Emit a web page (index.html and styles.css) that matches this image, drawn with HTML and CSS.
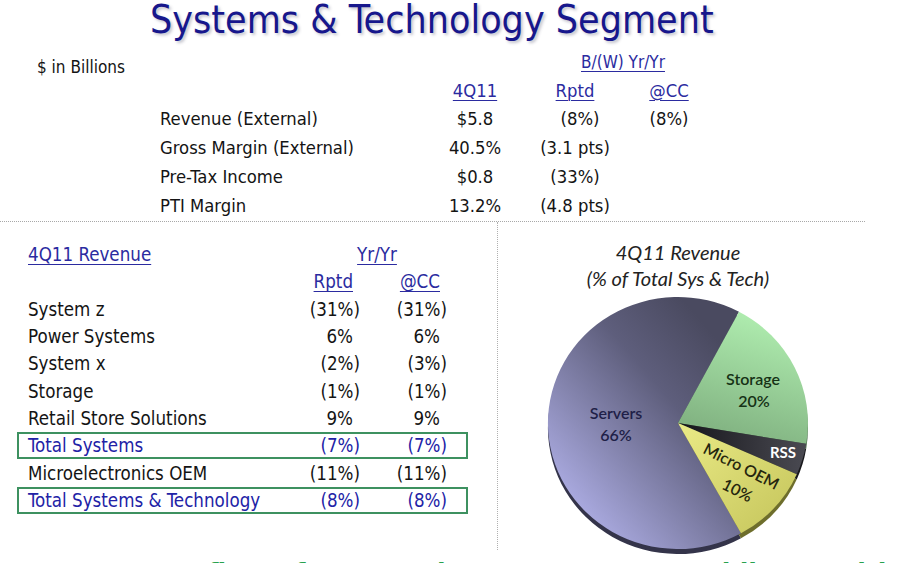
FILE: index.html
```html
<!DOCTYPE html>
<html>
<head>
<meta charset="utf-8">
<title>Systems &amp; Technology Segment</title>
<link rel="stylesheet" href="styles.css">
</head>
<body>
<h1 class="title">Systems &amp; Technology Segment</h1>

<section class="summary">
  <div class="units">$ in Billions</div>
  <div class="bw"><span class="ul">B/(W) Yr/Yr</span></div>

  <div class="c3 hd"><span class="ul">4Q11</span></div>
  <div class="c4 hd"><span class="ul">Rptd</span></div>
  <div class="c5 hd"><span class="ul">@CC</span></div>

  <div class="c2">Revenue (External)</div>
  <div class="c3">$5.8</div>
  <div class="c4 nudge">(8%)</div>
  <div class="c5">(8%)</div>

  <div class="c2">Gross Margin (External)</div>
  <div class="c3">40.5%</div>
  <div class="c4">(3.1 pts)</div>
  <div class="c5"></div>

  <div class="c2">Pre-Tax Income</div>
  <div class="c3">$0.8</div>
  <div class="c4">(33%)</div>
  <div class="c5"></div>

  <div class="c2">PTI Margin</div>
  <div class="c3">13.2%</div>
  <div class="c4">(4.8 pts)</div>
  <div class="c5"></div>
</section>

<section class="lower">
  <div class="rev">
    <div class="row">
      <span class="hdr"><span class="ul">4Q11 Revenue</span></span>
      <span class="yy"><span class="ul">Yr/Yr</span></span>
    </div>
    <div class="row">
      <span></span>
      <span class="num pos hdr"><span class="ul">Rptd</span></span>
      <span class="num pos hdr"><span class="ul">@CC</span></span>
    </div>
    <div class="row"><span>System z</span><span class="num">(31%)</span><span class="num">(31%)</span></div>
    <div class="row"><span>Power Systems</span><span class="num pos">6%</span><span class="num pos">6%</span></div>
    <div class="row"><span>System x</span><span class="num">(2%)</span><span class="num">(3%)</span></div>
    <div class="row"><span>Storage</span><span class="num">(1%)</span><span class="num">(1%)</span></div>
    <div class="row"><span>Retail Store Solutions</span><span class="num pos">9%</span><span class="num pos">9%</span></div>
    <div class="row box"><span>Total Systems</span><span class="num">(7%)</span><span class="num">(7%)</span></div>
    <div class="row"><span>Microelectronics OEM</span><span class="num">(11%)</span><span class="num">(11%)</span></div>
    <div class="row box"><span>Total Systems &amp; Technology</span><span class="num">(8%)</span><span class="num">(8%)</span></div>
  </div>

  <div class="chart">
    <div class="chart-title">4Q11 Revenue<br>(% of Total Sys &amp; Tech)</div>
    <svg class="pie" viewBox="0 0 280 270" width="280" height="270">
      <defs>
        <linearGradient id="gServ" x1="0.05" y1="0.95" x2="0.8" y2="0.1">
          <stop offset="0" stop-color="#bcbcf8"/>
          <stop offset="0.4" stop-color="#8686b0"/>
          <stop offset="0.7" stop-color="#5e5e7c"/>
          <stop offset="1" stop-color="#4a4a60"/>
        </linearGradient>
        <linearGradient id="gStor" x1="0.6" y1="0" x2="0.3" y2="1">
          <stop offset="0" stop-color="#b0eeb0"/>
          <stop offset="1" stop-color="#7eae7e"/>
        </linearGradient>
        <linearGradient id="gRss" x1="0" y1="0" x2="1" y2="0">
          <stop offset="0" stop-color="#15151a"/>
          <stop offset="1" stop-color="#4a4a52"/>
        </linearGradient>
        <linearGradient id="gMicro" x1="0" y1="0" x2="1" y2="1">
          <stop offset="0" stop-color="#eaea86"/>
          <stop offset="1" stop-color="#c4c45a"/>
        </linearGradient>
      </defs>
      <g transform="translate(0,5)">
        <path d="M140,132 L203,242.2 A130,126 0 1 1 201,20.8 Z" fill="#34344a"/>
        <path d="M140,132 L201,20.8 A130,126 0 0 1 268.2,152.8 Z" fill="#4e6e4e"/>
        <path d="M140,132 L268.2,152.8 A130,126 0 0 1 258.8,183.2 Z" fill="#18181c"/>
        <path d="M140,132 L258.8,183.2 A130,126 0 0 1 203,242.2 Z" fill="#6e6e2c"/>
      </g>
      <path d="M140,132 L203,242.2 A130,126 0 1 1 201,20.8 Z" fill="url(#gServ)"/>
      <path d="M140,132 L201,20.8 A130,126 0 0 1 268.2,152.8 Z" fill="url(#gStor)"/>
      <path d="M140,132 L268.2,152.8 A130,126 0 0 1 258.8,183.2 Z" fill="url(#gRss)"/>
      <path d="M140,132 L258.8,183.2 A130,126 0 0 1 203,242.2 Z" fill="url(#gMicro)"/>
      <text class="pl dark" x="78" y="128" text-anchor="middle">Servers</text>
      <text class="pl dark" x="78" y="150" text-anchor="middle">66%</text>
      <text class="pl green" x="215" y="94" text-anchor="middle">Storage</text>
      <text class="pl green" x="216" y="116" text-anchor="middle">20%</text>
      <text class="pl white" x="245" y="167" text-anchor="middle">RSS</text>
      <text class="pl olive" transform="translate(203,176) rotate(27)" y="5" text-anchor="middle">Micro OEM</text>
      <text class="pl olive" transform="translate(199,200) rotate(27)" y="5" text-anchor="middle">10%</text>
    </svg>
  </div>
</section>

<p class="takeaway">Strong profit performance in Power Systems while transitioning System z</p>
</body>
</html>
```

FILE: styles.css
```css
html, body {
  margin: 0;
  padding: 0;
}
body {
  width: 900px;
  height: 563px;
  overflow: hidden;
  background: #ffffff;
  color: #141414;
  font-family: "DejaVu Sans Condensed", "DejaVu Sans", sans-serif;
  font-stretch: condensed;
  font-size: 18.3px;
}

.title {
  margin: 0;
  padding-left: 150px;
  height: 48px;
  font-size: 39px;
  line-height: 40px;
  font-weight: normal;
  color: #17178c;
  text-shadow: 2px 2px 3px rgba(60, 60, 90, 0.3);
  white-space: nowrap;
}

.ul {
  text-decoration: underline;
  text-decoration-thickness: 1px;
  text-underline-offset: 3px;
  color: #2b2ba0;
}

.summary {
  display: grid;
  width: 865px;
  box-sizing: border-box;
  padding-left: 37px;
  grid-template-columns: 123px 270px 90px 110px 78px;
  grid-template-rows: 28px 28px 29px 29px 29px 29px;
  align-items: center;
  border-bottom: 1px dotted #a8a8a8;
  padding-bottom: 1px;
  white-space: nowrap;
}
.units {
  grid-column: 1 / 3;
  align-self: end;
  font-size: 17px;
  line-height: 18px;
}
.bw {
  grid-column: 4 / 6;
  text-align: center;
  padding-left: 18px;
  font-size: 17px;
}
.c2 { grid-column: 2; }
.c3 { grid-column: 3; text-align: center; }
.c4 { grid-column: 4; text-align: center; }
.c5 { grid-column: 5; text-align: center; }
.nudge { padding-left: 10px; }

.lower {
  display: flex;
  height: 328px;
}
.rev {
  width: 498px;
  box-sizing: border-box;
  border-right: 1px dotted #b0b0b0;
  padding-top: 19px;
  padding-left: 17px;
  font-size: 18.6px;
}
.row {
  display: grid;
  grid-template-columns: 272px 60px 87px;
  align-items: center;
  width: 451px;
  height: 27.3px;
  box-sizing: border-box;
  padding-left: 11px;
  white-space: nowrap;
}
.num { text-align: right; }
.pos { padding-right: 7px; }
.yy {
  grid-column: 2 / 4;
  text-align: center;
  padding-left: 7px;
}
.box {
  border: 2px solid #3d9160;
  padding-left: 9px;
  color: #2222a6;
}

.chart {
  flex: 1;
  padding-top: 17px;
  padding-left: 40px;
}
.chart-title {
  width: 280px;
  text-align: center;
  font-family: "Lato", "Open Sans", sans-serif;
  font-style: italic;
  font-size: 20px;
  line-height: 26px;
  color: #222222;
}
.pie {
  display: block;
}
.pl {
  font-family: "Lato", "Open Sans", sans-serif;
  font-size: 16px;
  font-weight: 600;
}
.dark { fill: #1f1f48; }
.green { fill: #163216; }
.white { fill: #ffffff; font-size: 15px; font-weight: bold; }
.olive { fill: #26260e; }

.takeaway {
  margin: 8px 0 0 0;
  padding-left: 55px;
  font-size: 28px;
  line-height: 34px;
  font-weight: bold;
  color: #28a24e;
  white-space: nowrap;
}
```
